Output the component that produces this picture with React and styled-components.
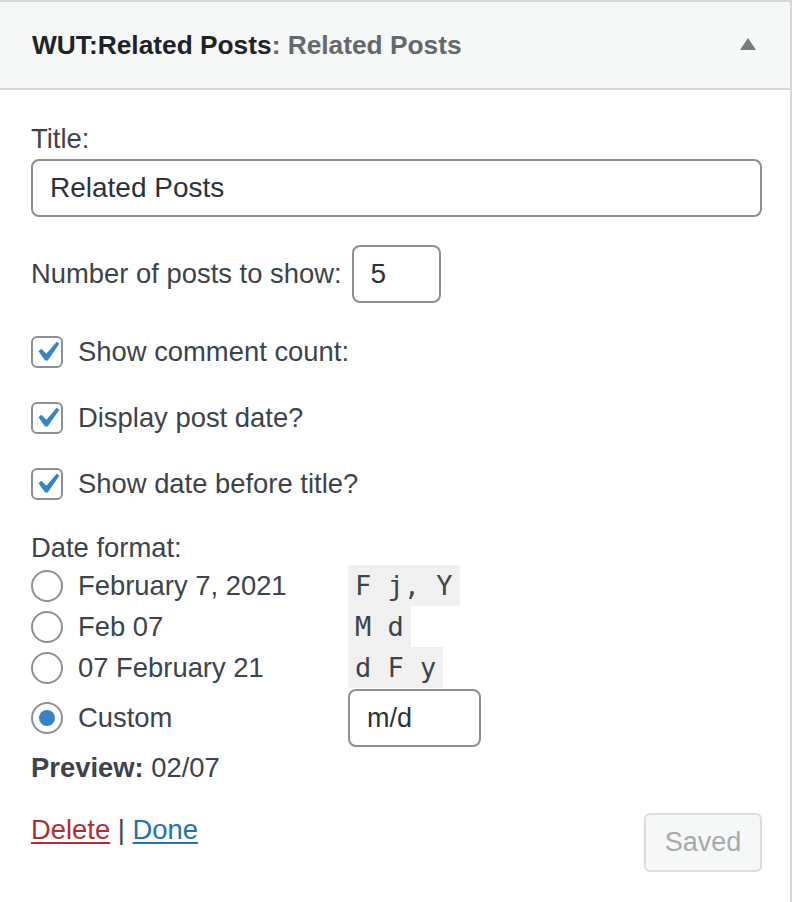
import React from "react";
import styled, { createGlobalStyle } from "styled-components";

const GlobalStyle = createGlobalStyle`
    body{
        margin: 0;
        padding: 0;
        background: #fff;
        font-family: "Liberation Sans", Arial, sans-serif;
        color: #3c434a;
    }
    *{
        box-sizing: border-box;
    }
`;

const Widget = styled.section`
    width: 792px;
    border-top: solid 2px #d5d7da;
    border-right: solid 2px #d5d7da;
    background: #fff;
`;

const Header = styled.div`
    height: 88px;
    display: flex;
    align-items: center;
    justify-content: space-between;
    padding: 0 32px 0 32px;
    background: #f6f7f7;
    border-bottom: solid 2px #d5d7da;
`;

const HeaderTitle = styled.h3`
    margin: 0;
    font-size: 26.3px;
    font-weight: bold;
    color: #1d2327;
`;

const InWidgetTitle = styled.span`
    color: #646970;
`;

const Arrow = styled.span`
    width: 0;
    height: 0;
    border-left: 8px solid transparent;
    border-right: 8px solid transparent;
    border-bottom: 12px solid #787c82;
    margin-right: 2px;
    margin-bottom: 2px;
`;

const Body = styled.div`
    padding: 31px 28px 31px 31px;
    font-size: 27.4px;
`;

const Label = styled.div`
    line-height: ${props => props.lh || 36}px;
    margin-top: ${props => props.top || 0}px;
`;

const TextInput = styled.div`
    height: 58px;
    width: ${props => props.width || "100%"};
    margin-top: ${props => props.top || 0}px;
    margin-left: ${props => props.left || 0}px;
    display: flex;
    align-items: center;
    padding: 0 17px;
    border: solid 2px #8c8f94;
    border-radius: 8px;
    background: #fff;
    color: #2c3338;
    font-size: ${props => props.size || 28}px;
`;

const InlineRow = styled.div`
    display: flex;
    align-items: baseline;
    margin-top: ${props => props.top || 0}px;
`;

const CheckRow = styled.div`
    display: flex;
    align-items: center;
    height: 32px;
    gap: 15px;
    margin-top: ${props => props.top || 0}px;
`;

const CheckBox = styled.span`
    width: 32px;
    height: 32px;
    flex-shrink: 0;
    display: flex;
    align-items: center;
    justify-content: center;
    border: solid 2px #8c8f94;
    border-radius: 6px;
    background: #fff;

    svg{
        width: 40px;
        height: 40px;
        flex-shrink: 0;
    }
`;

const RadioRow = styled.div`
    display: flex;
    align-items: center;
    height: ${props => props.height || 41}px;
    margin-top: ${props => props.top || 0}px;
`;

const Radio = styled.span`
    width: 32px;
    height: 32px;
    flex-shrink: 0;
    margin-right: 15px;
    display: flex;
    align-items: center;
    justify-content: center;
    border: solid 2px #8c8f94;
    border-radius: 50%;
    background: #fff;

    &::after{
        content: '';
        width: 16px;
        height: 16px;
        border-radius: 50%;
        background: ${props => props.$checked ? "#3582c4" : "transparent"};
    }
`;

const RadioLabel = styled.span`
    width: 270px;
`;

const Code = styled.code`
    height: 41px;
    line-height: 41px;
    padding: 0 7px;
    background: #f0f0f1;
    color: #3c434a;
    font-family: "DejaVu Sans Mono", "Liberation Mono", monospace;
    font-size: 27px;
`;

const Preview = styled.div`
    line-height: 36px;
    margin-top: 3px;
`;

const Footer = styled.div`
    display: flex;
    justify-content: space-between;
    align-items: flex-start;
    margin-top: 27px;
`;

const Links = styled.div`
    line-height: 36px;
    margin-top: -1px;
`;

const Link = styled.a`
    color: ${props => props.$danger ? "#b32d2e" : "#2271b1"};
    text-decoration: underline;
    text-underline-offset: 3px;
    text-decoration-thickness: 2px;
    cursor: pointer;
`;

const SavedButton = styled.button`
    width: 118px;
    height: 59px;
    padding: 0;
    border: solid 2px #dcdcde;
    border-radius: 6px;
    background: #f6f7f7;
    color: #a7aaad;
    font-family: "Liberation Sans", Arial, sans-serif;
    font-size: 27px;
`;

const Check = () => (
    <svg viewBox="0 0 20 20">
        <path fill="#3582c4" d="M14.83 4.89l1.34.94-5.81 8.38H9.02L5.78 9.67l1.34-1.25 2.57 2.4z" />
    </svg>
);

const formats = [
    { label: "February 7, 2021", code: "F j, Y" },
    { label: "Feb 07", code: "M d" },
    { label: "07 February 21", code: "d F y" },
];

const App = () => {
    return (
        <Widget>
            <GlobalStyle />
            <Header>
                <HeaderTitle>
                    WUT:Related Posts<InWidgetTitle>: Related Posts</InWidgetTitle>
                </HeaderTitle>
                <Arrow />
            </Header>
            <Body>
                <Label>Title:</Label>
                <TextInput top={2}>Related Posts</TextInput>

                <InlineRow top={28}>
                    <span>Number of posts to show:</span>
                    <TextInput width="89px" left={10}>5</TextInput>
                </InlineRow>

                <CheckRow top={33}>
                    <CheckBox><Check /></CheckBox>
                    <span>Show comment count:</span>
                </CheckRow>
                <CheckRow top={34}>
                    <CheckBox><Check /></CheckBox>
                    <span>Display post date?</span>
                </CheckRow>
                <CheckRow top={34}>
                    <CheckBox><Check /></CheckBox>
                    <span>Show date before title?</span>
                </CheckRow>

                <Label top={31} lh={34}>Date format:</Label>
                {formats.map(f => (
                    <RadioRow key={f.code}>
                        <Radio />
                        <RadioLabel>{f.label}</RadioLabel>
                        <Code>{f.code}</Code>
                    </RadioRow>
                ))}
                <RadioRow height={58} top={1}>
                    <Radio $checked />
                    <RadioLabel>Custom</RadioLabel>
                    <TextInput width="133px" size={27}>m/d</TextInput>
                </RadioRow>

                <Preview><b>Preview:</b> 02/07</Preview>

                <Footer>
                    <Links>
                        <Link $danger>Delete</Link> | <Link>Done</Link>
                    </Links>
                    <SavedButton disabled>Saved</SavedButton>
                </Footer>
            </Body>
        </Widget>
    );
};

export default App;
